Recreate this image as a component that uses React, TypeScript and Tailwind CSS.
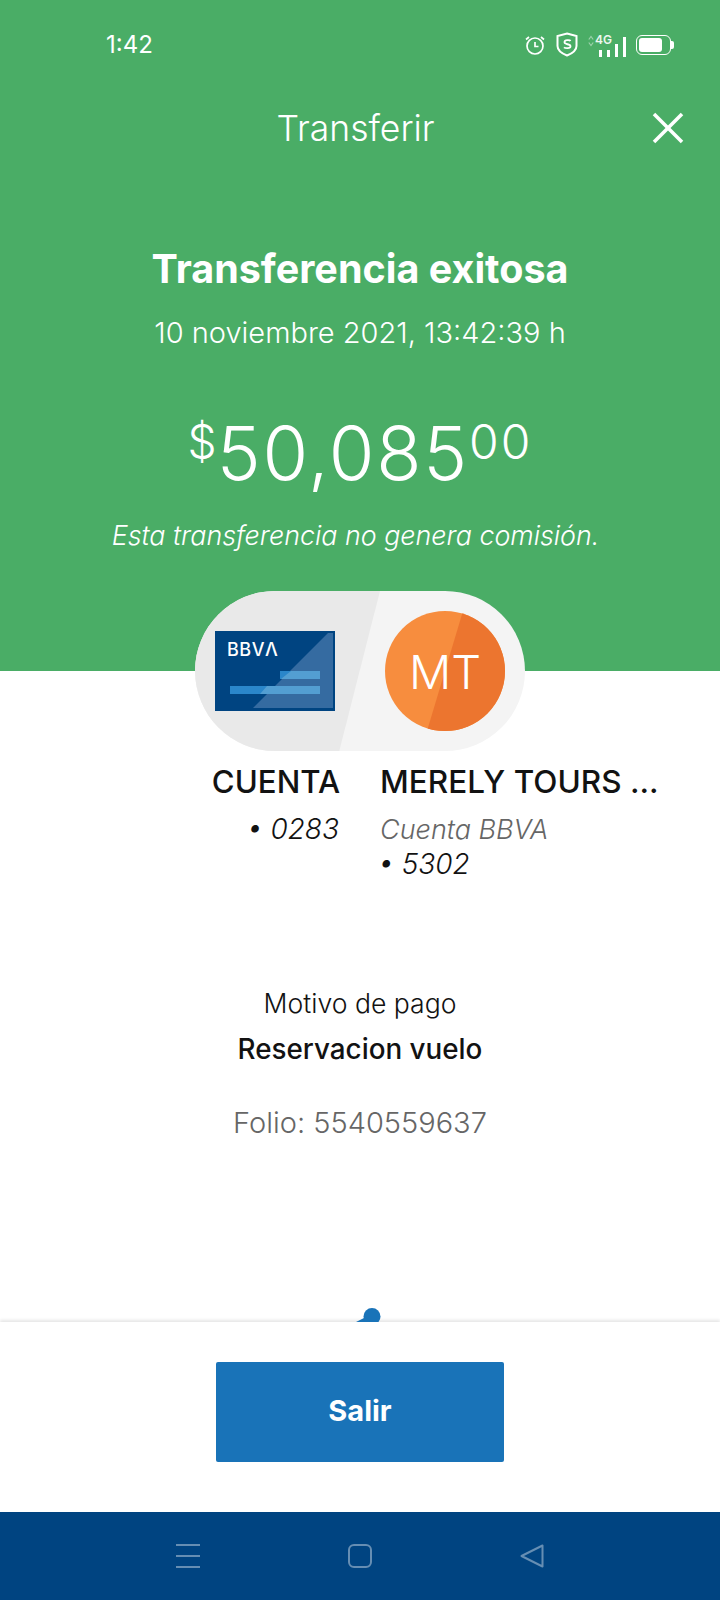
import { X } from "lucide-react";

const font = "font-['Inter','Liberation_Sans',sans-serif]";

const StatusIcons = () => (
  <div className="flex items-center">
    <svg width="22" height="22" viewBox="0 0 22 22" fill="none" stroke="white" strokeWidth="1.7" className="mr-[10px]">
      <circle cx="11" cy="12" r="8" />
      <path d="M11 8v4.500h3.500M2 5.500L5 3M20 5.500L17 3" />
    </svg>
    <svg width="22" height="25" viewBox="0 0 22 25" fill="none" stroke="white" strokeWidth="2" className="mr-[10px]">
      <path d="M11 1.500L20.500 4v10c0 4.500-4.500 7.500-9.500 9.500C6 21.500 1.500 18.500 1.500 14V4z" />
      <path d="M14.500 9c-.5-1-6-1.500-6 1.300 0 2.700 6 1.200 6 4 0 2.700-5.500 2-6.500 1" strokeWidth="1.800" />
    </svg>
    <div className="relative mr-[11px] h-[24px] w-[37px]">
      <svg width="6" height="12" viewBox="0 0 6 12" fill="none" stroke="white" strokeOpacity=".45" strokeWidth="1.200" className="absolute left-[0px] top-[2px]">
        <path d="M.8 4.500L3 1.500l2.200 3M.8 7.500L3 10.500l2.200-3" />
      </svg>
      <span className="absolute left-[7px] top-[-1px] text-[12px] font-semibold leading-[16px] text-white/90">4G</span>
      <div className="absolute bottom-0 left-[11px] flex items-end gap-[5px]">
        <div className="h-[7px] w-[3px] bg-white" />
        <div className="h-[7px] w-[3px] bg-white" />
        <div className="h-[13px] w-[3px] bg-white" />
        <div className="h-[20px] w-[3px] bg-white" />
      </div>
    </div>
    <div className="flex items-center">
      <div className="h-[20px] w-[35px] rounded-[6px] border-[1.5px] border-white p-[2px]">
        <div className="h-full w-[23px] rounded-[3px] bg-white" />
      </div>
      <div className="h-[8px] w-[3px] rounded-r-[2px] bg-white" />
    </div>
  </div>
);

const BankCard = () => (
  <svg width="120" height="80" viewBox="0 0 120 80" className="shrink-0">
    <rect width="120" height="80" fill="#004481" />
    <path d="M113 2H118V77H38z" fill="#3b70a4" opacity=".9" />
    <rect x="65" y="40" width="40" height="8" fill="#2a86ca" />
    <rect x="15" y="55" width="90" height="8" fill="#2a86ca" />
    <path d="M76 40h29v8H66zM52 55h53v8H45z" fill="#5ba2d4" opacity=".85" />
    <text x="12" y="25" fill="white" fontSize="18" fontWeight="500" fontFamily="Inter, sans-serif" letterSpacing="0.5">BBVΛ</text>
  </svg>
);

const Avatar = () => (
  <div className="relative flex h-[120px] w-[120px] shrink-0 items-center justify-center overflow-hidden rounded-full bg-[#f78d3e]">
    <svg width="120" height="120" viewBox="0 0 120 120" className="absolute inset-0">
      <path d="M78 0H120V120H42z" fill="#ec752f" />
    </svg>
    <span className="relative text-[47px] font-light leading-none text-white">MT</span>
  </div>
);

const NavBar = () => (
  <div className="flex h-[88px] items-center justify-between bg-[#004481] pb-[1px] pl-[176px] pr-[176px]">
    <div className="flex h-[24px] w-[24px] flex-col justify-between">
      <div className="h-[2px] bg-white/40" />
      <div className="h-[2px] bg-white/40" />
      <div className="h-[2px] bg-white/40" />
    </div>
    <div className="h-[24px] w-[24px] rounded-[6px] border-2 border-white/40" />
    <svg width="24" height="24" viewBox="0 0 24 24" fill="none" stroke="white" strokeOpacity=".4" strokeWidth="2" strokeLinejoin="round">
      <path d="M22.500 1.500V22.500L1.500 12z" />
    </svg>
  </div>
);

export default function App() {
  return (
    <div className={`${font} flex h-[1600px] w-[720px] flex-col overflow-hidden bg-white`}>
      <div className="flex h-[671px] shrink-0 flex-col bg-[#4aad66] text-white">
        <div className="flex h-[88px] items-center justify-between pl-[106px] pr-[46px] pt-[1px]">
          <span className="text-[24px] leading-none">1:42</span>
          <StatusIcons />
        </div>
        <div className="relative flex h-[80px] items-center justify-center">
          <span className="pr-[9px] pt-[2px] text-[35.5px] font-light leading-none">Transferir</span>
          <button className="absolute right-[24px] top-[12px]">
            <X size={56} strokeWidth={1.5} strokeLinecap="butt" color="white" />
          </button>
        </div>
        <h1 className="mt-[77px] text-center text-[39.5px] font-bold leading-[48px]">Transferencia exitosa</h1>
        <p className="mt-[22px] text-center text-[29px] font-light leading-[36px]">10 noviembre 2021, 13:42:39 h</p>
        <div className="mt-[56px] flex h-[92px] items-start justify-center font-light">
          <span className="mt-[4px] text-[46px] leading-[60px]">$</span>
          <span className="text-[74px] leading-[92px] tracking-[1.8px]">50,085</span>
          <span className="mt-[5px] text-[48px] leading-[60px] tracking-[2px]">00</span>
        </div>
        <p className="mt-[18px] pr-[9px] text-center text-[26.8px] font-light italic leading-[36px]">Esta transferencia no genera comisión.</p>
      </div>

      <div className="relative -mt-[80px] flex h-[160px] w-[330px] shrink-0 self-center overflow-hidden rounded-full bg-[#f4f4f4]">
        <div className="absolute inset-y-0 left-0 w-[185px] bg-[#e9e9e9] [clip-path:polygon(0_0,100%_0,78%_100%,0_100%)]" />
        <div className="relative flex w-full items-center justify-between pl-[20px] pr-[20px]">
          <BankCard />
          <Avatar />
        </div>
      </div>

      <div className="mt-[12px] flex h-[112px] shrink-0 gap-[40px] pl-[212px]">
        <div className="flex w-[128px] flex-col items-end">
          <span className="text-[31.2px] font-medium leading-[38px] text-[#121212]">CUENTA</span>
          <span className="mt-[10px] pr-[1px] text-[28px] font-light italic leading-[36px] text-[#121212]">• 0283</span>
        </div>
        <div className="flex flex-col">
          <span className="text-[31.5px] font-medium leading-[38px] text-[#121212]">MERELY TOURS ...</span>
          <span className="mt-[11px] text-[27px] font-light italic leading-[36px] text-[#666666]">Cuenta BBVA</span>
          <span className="-ml-[2px] text-[28px] font-light italic leading-[32px] text-[#121212]">• 5302</span>
        </div>
      </div>

      <div className="flex flex-1 flex-col items-center pt-[110px]">
        <p className="text-[26.6px] font-light leading-[36px] text-[#121212]">Motivo de pago</p>
        <p className="mt-[10px] text-[27.8px] font-medium leading-[36px] text-[#121212]">Reservacion vuelo</p>
        <p className="mt-[38px] text-[29px] font-light leading-[36px] text-[#666666]">Folio: 5540559637</p>
      </div>

      <div className="relative flex h-[190px] shrink-0 items-start justify-center bg-white pt-[40px] shadow-[0_-2px_3px_rgba(0,0,0,0.1)]">
        <svg width="40" height="14" viewBox="0 0 40 14" className="absolute left-[350px] top-[-14px]">
          <circle cx="22" cy="8.500" r="8.500" fill="#1973b8" />
          <path d="M6 14L16 9L20 14z" fill="#1973b8" />
        </svg>
        <button className="h-[100px] w-[288px] rounded-[2px] bg-[#1973b8] pb-[3px] text-[29px] font-bold text-white">Salir</button>
      </div>

      <NavBar />
    </div>
  );
}
